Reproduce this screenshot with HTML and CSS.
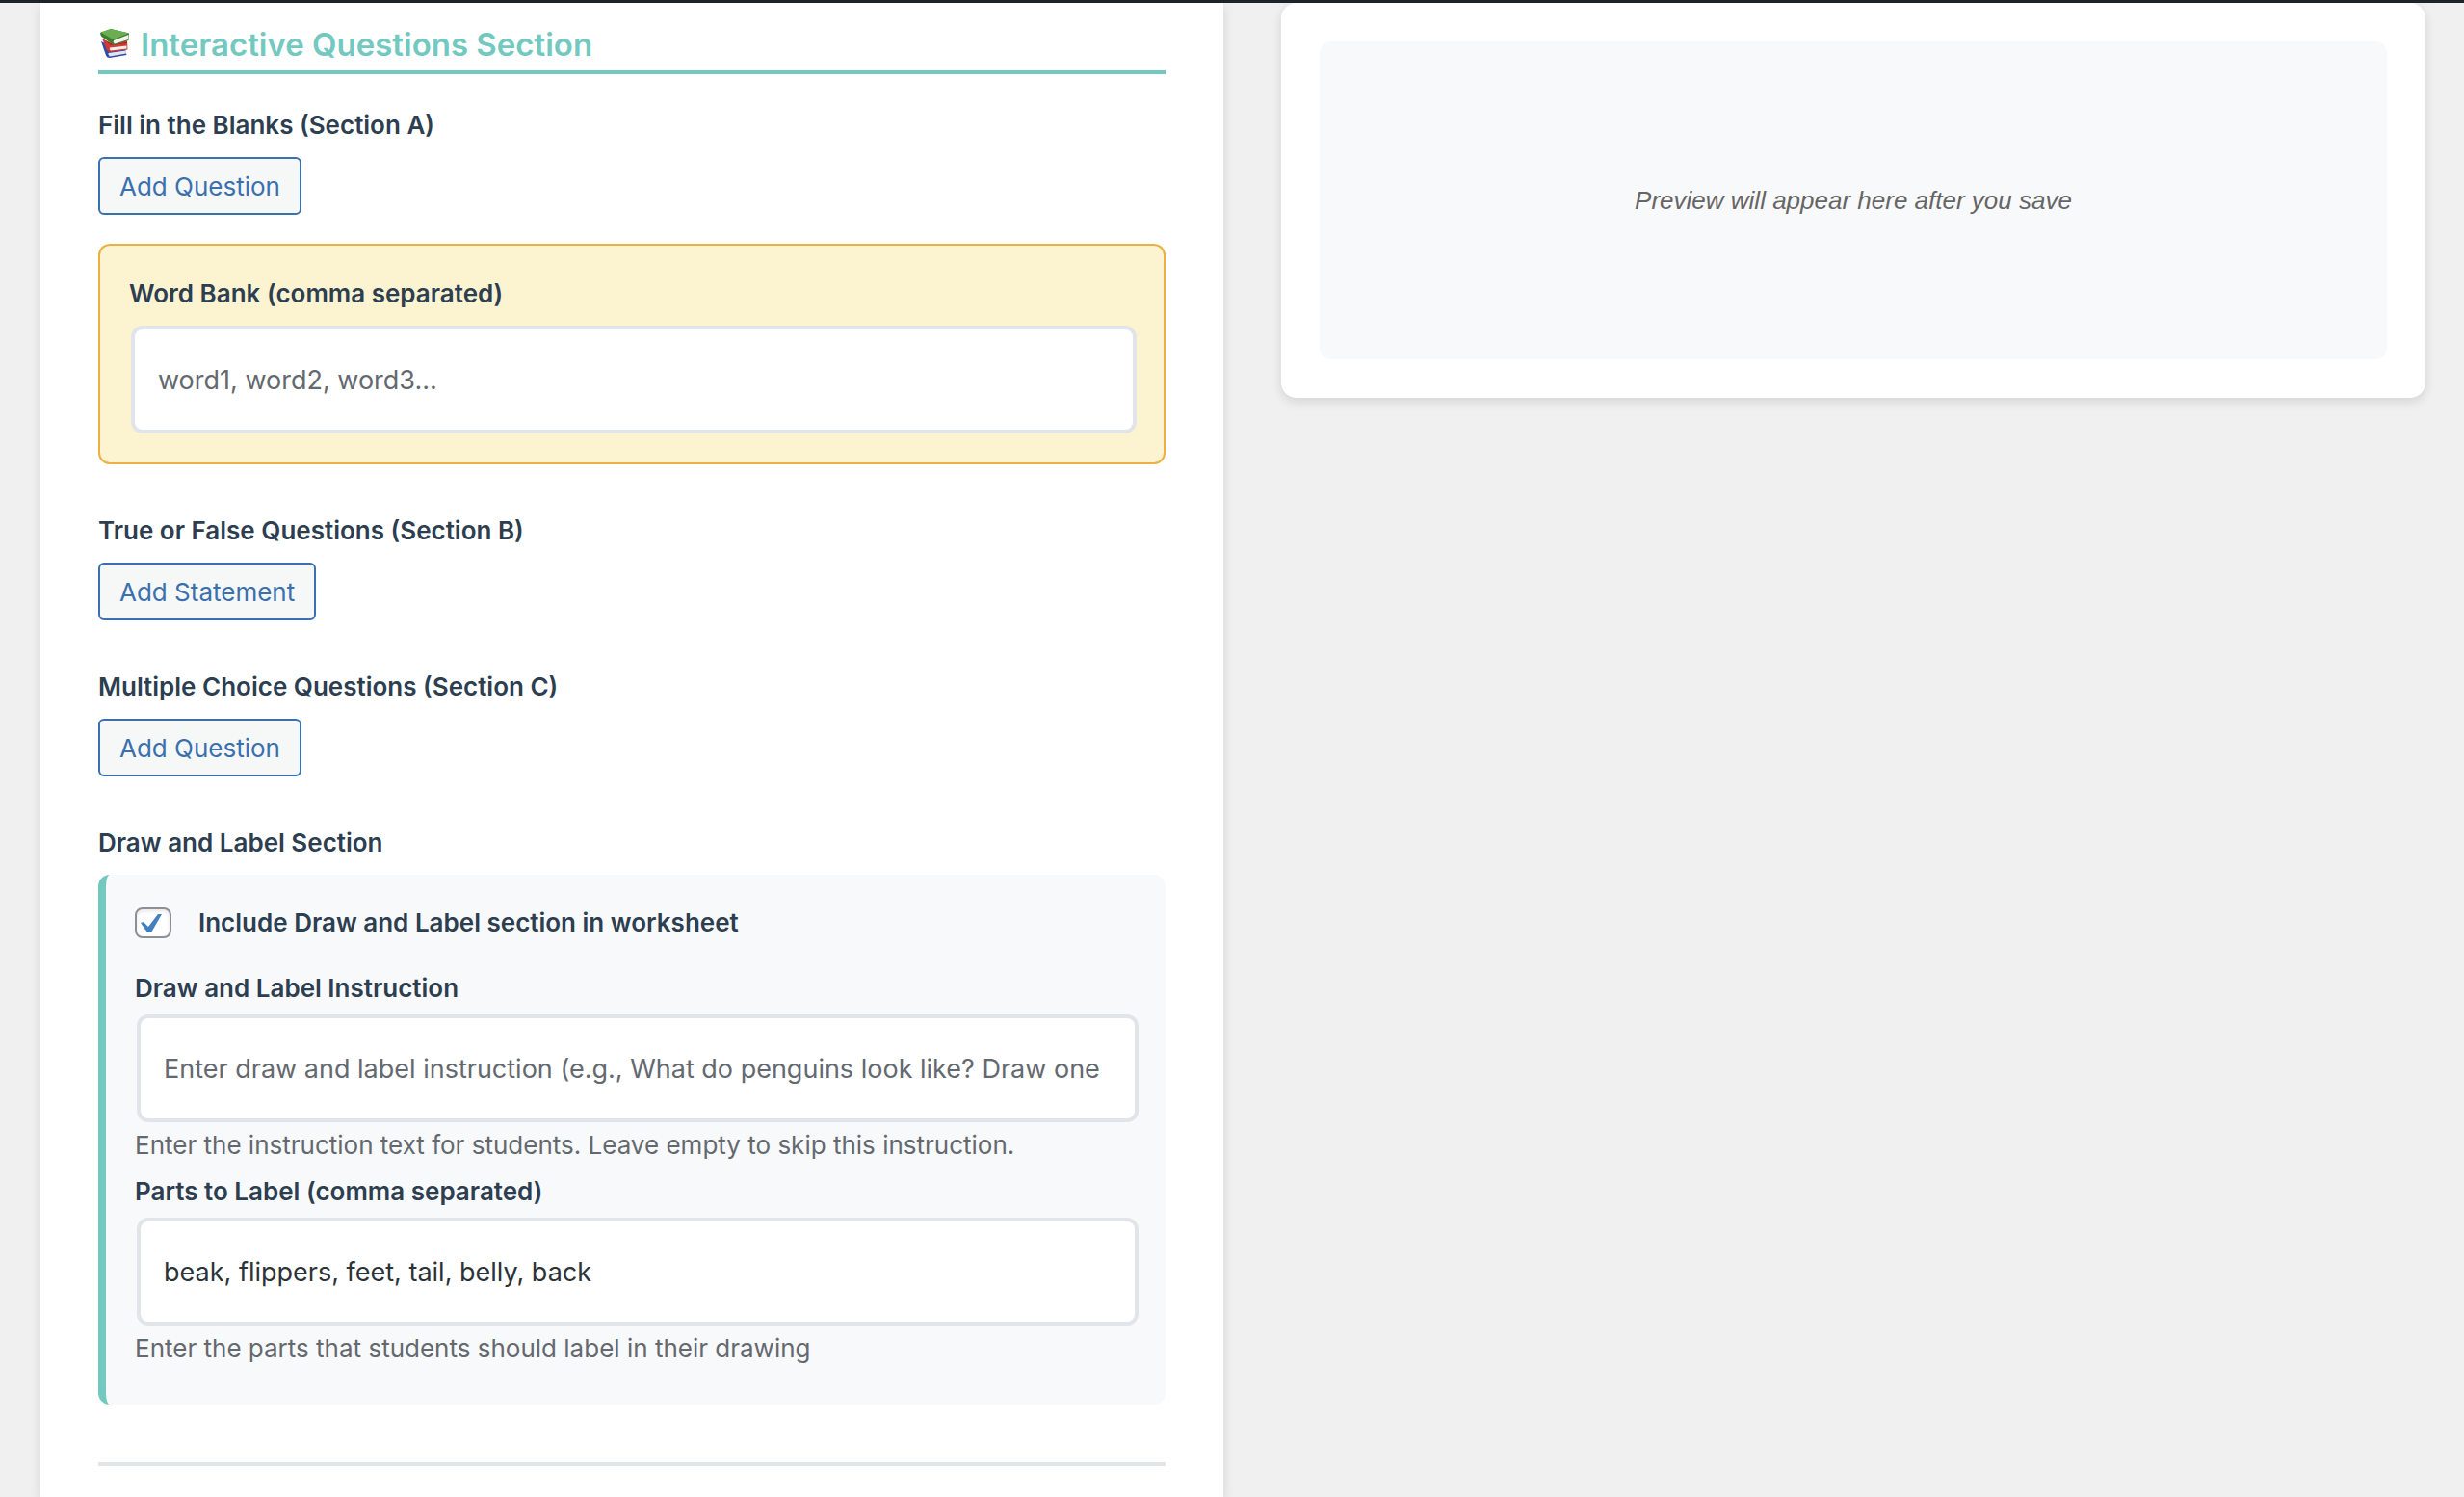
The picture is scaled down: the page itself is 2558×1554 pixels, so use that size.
FILE: index.html
```html
<!DOCTYPE html>
<html lang="en">
<head>
    <meta charset="UTF-8">
    <meta name="viewport" content="width=device-width, initial-scale=1">
    <title>Worksheet Builder</title>
    <link rel="stylesheet" href="styles.css">
</head>
<body>

    <div class="admin-bar"></div>

    <div class="builder">
        <form class="builder-form">
            <h2 class="section-title">
                <svg class="books" viewBox="0 0 34 34" aria-hidden="true">
                    <path d="M3 14 L7 16 L12 23 L28 22 L29.500 28 L12 31 Q9 31 8 28.500 Z" fill="#2f4bab"/>
                    <path d="M10.500 26 L28.500 23.500 L29 26.500 L12 29.500 Q10 28.500 10.500 26 Z" fill="#e4e5ec"/>
                    <path d="M4 11 L14 16 L30 13.500 L30.500 22.500 L13 25 Q9.500 25 8.500 22 Z" fill="#cf3a32"/>
                    <path d="M12 20.500 L29.500 18.500 L29.500 21.500 L13 23.500 Q11 22.500 12 20.500 Z" fill="#f3efee"/>
                    <path d="M8 13.500 L16 17.500 L30 14.500 L30 16 L13 18 Z" fill="#a32a25"/>
                    <path d="M2 5 L13 1 L32 5.500 L31.500 13 L17 17.500 Q15 17.500 14 16.500 L3.500 9 Q2 7 2 5 Z" fill="#3f7c30"/>
                    <path d="M16 13 L31.500 7 L31 12 L17 16.500 Q15 15 16 13 Z" fill="#f4f4ef"/>
                    <path d="M2.500 4.500 L13 1 L32 5.500 L15.500 12 Z" fill="#69ae50"/>
                </svg>
                Interactive Questions Section
            </h2>

            <div class="field">
                <h3 class="field-label">Fill in the Blanks (Section A)</h3>
                <button type="button" class="button">Add Question</button>
                <div class="word-bank">
                    <label class="field-label" for="word_bank">Word Bank (comma separated)</label>
                    <input type="text" class="text-input" id="word_bank" placeholder="word1, word2, word3...">
                </div>
            </div>

            <div class="field">
                <h3 class="field-label">True or False Questions (Section B)</h3>
                <button type="button" class="button">Add Statement</button>
            </div>

            <div class="field">
                <h3 class="field-label">Multiple Choice Questions (Section C)</h3>
                <button type="button" class="button">Add Question</button>
            </div>

            <div class="field">
                <h3 class="field-label">Draw and Label Section</h3>
                <div class="draw-box">
                    <label class="check-row">
                        <input type="checkbox" class="checkbox" checked>
                        Include Draw and Label section in worksheet
                    </label>

                    <label class="draw-label" for="instruction">Draw and Label Instruction</label>
                    <input type="text" class="text-input" id="instruction" placeholder="Enter draw and label instruction (e.g., What do penguins look like? Draw one">
                    <p class="description">Enter the instruction text for students. Leave empty to skip this instruction.</p>

                    <label class="draw-label" for="parts">Parts to Label (comma separated)</label>
                    <input type="text" class="text-input" id="parts" value="beak, flippers, feet, tail, belly, back">
                    <p class="description">Enter the parts that students should label in their drawing</p>
                </div>
            </div>

            <hr class="divider">
        </form>

        <div class="preview">
            <div class="preview-content">
                <p class="preview-text">Preview will appear here after you save</p>
            </div>
        </div>
    </div>

</body>
</html>
```

FILE: styles.css
```css
body {
    margin: 0;
    background-color: #f0f0f0;
    font-family: Inter, "Liberation Sans", sans-serif;
    font-size: 26px;
    line-height: 36px;
    color: #2c3e50;
}

.admin-bar {
    position: relative;
    z-index: 1;
    height: 3px;
    background-color: #1d2327;
}

.builder {
    display: flex;
    align-items: stretch;
    gap: 60px;
    min-height: calc(100vh - 3px);
    padding: 0 40px 0 42px;
    box-sizing: border-box;
}

.builder-form,
.preview {
    flex: 1;
    min-width: 0;
    background-color: #fff;
    box-shadow: 0 4px 12px rgba(0, 0, 0, 0.12);
}

.builder-form {
    padding: 23px 60px 0;
}

.section-title {
    display: flex;
    align-items: center;
    gap: 10px;
    margin: 0 0 33px;
    padding-bottom: 7px;
    border-bottom: 4px solid #73c9c0;
    font-size: 33px;
    font-weight: 600;
    line-height: 40px;
    color: #73c9c0;
}

.books {
    width: 34px;
    height: 34px;
}

.field {
    margin-bottom: 49px;
}

.field-label {
    display: block;
    margin: 0 0 13px;
    font-size: 26px;
    font-weight: 600;
    line-height: 40px;
}

.button {
    display: block;
    height: 60px;
    padding: 0 20px;
    border: 2px solid #3a70ae;
    border-radius: 6px;
    background-color: #f6f7f7;
    color: #3a70ae;
    font-family: inherit;
    font-size: 26px;
    cursor: pointer;
}

.word-bank {
    margin-top: 30px;
    padding: 30px;
    border: 2px solid #ecb040;
    border-radius: 12px;
    background-color: #fcf3d1;
}

.text-input {
    display: block;
    box-sizing: border-box;
    width: 100%;
    height: 112px;
    margin: 0 2px;
    padding: 0 24px;
    border: 4px solid #e1e4e8;
    border-radius: 12px;
    background-color: #fff;
    color: #2c3338;
    font-family: inherit;
    font-size: 27px;
}

.text-input::placeholder {
    color: #646970;
}

.draw-box {
    padding: 32px 30px 28px;
    border-left: 8px solid #73c9c0;
    border-radius: 12px;
    background-color: #f8f9fb;
}

.check-row {
    display: flex;
    align-items: center;
    gap: 28px;
    margin-bottom: 32px;
    font-weight: 600;
}

.checkbox {
    appearance: none;
    box-sizing: border-box;
    width: 38px;
    height: 32px;
    margin: 0;
    border: 2px solid #8c8f94;
    border-radius: 8px;
    background-color: #fff;
    box-shadow: inset 0 2px 4px rgba(0, 0, 0, 0.1);
}

.checkbox:checked::before {
    content: "";
    display: block;
    width: 34px;
    height: 28px;
    background-color: #4480c0;
    clip-path: polygon(4px 14px, 7px 13px, 12px 18px, 22px 5px, 26px 5px, 15px 24px, 11px 24px);
}

.draw-label {
    display: block;
    margin-bottom: 9px;
    font-weight: 600;
}

.description {
    margin: 6px 0 12px;
    color: #646970;
}

.divider {
    height: 4px;
    margin: 60px 0 0;
    border: none;
    background-color: #e1e4e8;
}

.preview {
    align-self: flex-start;
    padding: 40px;
    border-radius: 16px;
}

.preview-content {
    padding: 147px 40px;
    border-radius: 12px;
    background-color: #f8f9fb;
    text-align: center;
}

.preview-text {
    margin: 0;
    font-family: "Liberation Sans", Arial, sans-serif;
    font-style: italic;
    color: #666;
}
```
